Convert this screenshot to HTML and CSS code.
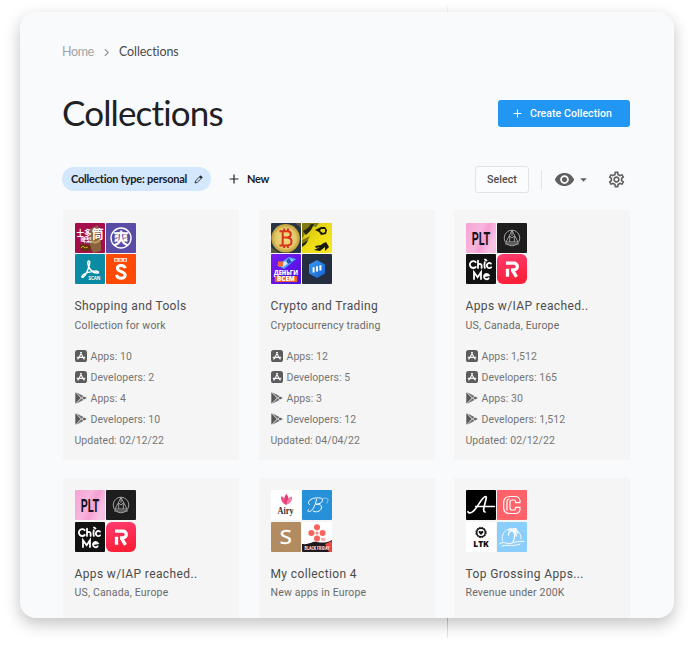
FILE: index.html
```html
<!DOCTYPE html>
<html lang="en">
<head>
<meta charset="utf-8">
<title>Collections</title>
<link rel="stylesheet" href="styles.css">
</head>
<body>
<svg class="defs" width="0" height="0" aria-hidden="true">
  <defs>
    <linearGradient id="pink" x1="0" y1="0" x2="1" y2="0.4"><stop offset="0" stop-color="#f6a4d6"/><stop offset=".5" stop-color="#f7b6dd"/><stop offset=".7" stop-color="#f59fd2"/><stop offset="1" stop-color="#f8c3e3"/></linearGradient>
    <linearGradient id="red" x1="0" y1="0" x2=".3" y2="1"><stop offset="0" stop-color="#ff3d72"/><stop offset="1" stop-color="#fb1f38"/></linearGradient>
    <linearGradient id="yellow" x1="0" y1="0" x2="1" y2="1"><stop offset="0" stop-color="#c9b90c"/><stop offset=".5" stop-color="#eddb16"/><stop offset="1" stop-color="#fbe822"/></linearGradient>
    <linearGradient id="violet" x1="0" y1="0" x2="1" y2="1"><stop offset="0" stop-color="#7a1bf0"/><stop offset="1" stop-color="#4a10e0"/></linearGradient>
    <radialGradient id="coin"><stop offset="0" stop-color="#f3dc86"/><stop offset=".75" stop-color="#e2c768"/><stop offset="1" stop-color="#b99a38"/></radialGradient>
    <linearGradient id="hex" x1="0" y1="0" x2="1" y2="1"><stop offset="0" stop-color="#3a9af5"/><stop offset="1" stop-color="#1463cf"/></linearGradient>
  </defs>
  <symbol id="i-appstore" viewBox="0 0 12 12"><rect width="12" height="12" rx="2.6" fill="#5c5c5c"/><path d="M6.5 2.6 3.5 8.6M5.5 2.6l3 6M2.2 7.3h7.6M2.700 9l.4-.7M9.300 9l-.4-.7" fill="none" stroke="#f5f5f5" stroke-width="1.15" stroke-linecap="round"/></symbol>
  <symbol id="i-play" viewBox="0 0 12 12"><path d="M.3.3v11.4L5.800 6z" fill="#585858"/><path d="M1.100.3 8.500 4.100 6.500 5.700zM1.100 11.700l7.400-3.800-2-1.600z" fill="#707070"/><path d="M9 4.400 11.900 6 9 7.600 7.200 6z" fill="#606060"/></symbol>
  <symbol id="i-plus" viewBox="0 0 10 10"><path d="M5 .6v8.800M.6 5h8.800" stroke="currentColor" stroke-width="1.2" fill="none"/></symbol>
  <symbol id="t-emblem" viewBox="0 0 30 30"><rect width="30" height="30" fill="#1d1d1d"/><g fill="none" stroke="#b5b5b5" stroke-width=".85"><circle cx="15" cy="15" r="7.800"/><path d="M15 7.500 9 19h12zM12.700 19v-6L15 15l2.300-2v6M8 21h14M15 7.500V13"/></g></symbol>
  <symbol id="t-chic" viewBox="0 0 30 30"><rect width="30" height="30" fill="#111"/><g fill="none" stroke="#fff" stroke-width="1.800" stroke-linecap="round"><path d="M9.700 8.200A3.400 3.400 0 1 0 9.700 13M12 6.700v7.200M12 11.300c.5-1.800 3.600-1.800 3.600.2v2.400M18.800 8.200c-.6 2-.6 3.800 0 5.700M19 5.500l1.500 1M25 9.600a2.500 2.500 0 1 0 .1 3.700M8 25v-6.800l3.600 5 3.400-5V25M18 22.200l4.900-.8a2.600 2.600 0 1 0-.3 2.900"/></g></symbol>
  <symbol id="t-r" viewBox="0 0 30 30"><rect width="30" height="30" rx="6" fill="url(#red)"/><path d="M9 9.200h8a3.300 3.300 0 0 1 0 6.600h-3M10.500 22.800v-8M15.300 16l4.200 6.800" fill="none" stroke="#fff" stroke-width="3.300"/></symbol>
</svg>

<main class="panel">
  <nav class="crumbs">
    <span class="crumb-home">Home</span>
    <svg class="chevron" viewBox="0 0 6 10"><path d="m1 1 4 4-4 4" fill="none" stroke="currentColor" stroke-width="1.300"/></svg>
    <span>Collections</span>
  </nav>

  <header class="head">
    <h1>Collections</h1>
    <button class="create"><svg class="plus-s"><use href="#i-plus"/></svg>Create Collection</button>
  </header>

  <section class="toolbar">
    <div class="pill">Collection type: personal
      <svg class="pencil" viewBox="0 0 10 10"><path d="m1.200 8.800.4-2.200L7 1.200c.5-.5 1.300.3 1.800.8s.2.900-.2 1.300L3.400 8.400z" fill="none" stroke="currentColor" stroke-width="1"/><path d="m5.800 2.300 1.400-1.400 2 2-1.400 1.400z" fill="currentColor"/></svg>
    </div>
    <button class="new"><svg class="plus-m"><use href="#i-plus"/></svg>New</button>
    <button class="select">Select</button>
    <span class="divider"></span>
    <svg class="eye" viewBox="0 0 24 24"><path fill="currentColor" d="M12 4.500C7 4.500 2.730 7.610 1 12c1.730 4.390 6 7.500 11 7.500s9.270-3.110 11-7.500c-1.730-4.390-6-7.500-11-7.500zM12 17c-2.760 0-5-2.240-5-5s2.240-5 5-5 5 2.240 5 5-2.240 5-5 5zm0-8c-1.660 0-3 1.340-3 3s1.340 3 3 3 3-1.340 3-3-1.340-3-3-3z"/></svg>
    <svg class="caret" viewBox="0 0 8 4"><path d="M.3 0h7.400L4 4z" fill="currentColor"/></svg>
    <svg class="gear" viewBox="0 0 24 24"><path fill="currentColor" d="M19.430 12.980c.04-.32.07-.64.07-.98s-.03-.66-.07-.98l2.110-1.650c.19-.15.24-.42.12-.64l-2-3.460c-.12-.22-.39-.3-.61-.22l-2.490 1c-.52-.4-1.080-.73-1.690-.98l-.38-2.650C14.460 2.180 14.250 2 14 2h-4c-.25 0-.46.18-.49.42l-.38 2.650c-.61.25-1.170.59-1.690.98l-2.490-1c-.23-.09-.49 0-.61.22l-2 3.460c-.13.22-.07.49.12.64l2.110 1.650c-.04.32-.07.65-.07.98s.03.66.07.98l-2.110 1.650c-.19.15-.24.42-.12.64l2 3.460c.12.22.39.3.61.22l2.490-1c.52.4 1.080.73 1.690.98l.38 2.650c.03.24.24.42.49.42h4c.25 0 .46-.18.49-.42l.38-2.650c.61-.25 1.170-.59 1.690-.98l2.490 1c.23.09.49 0 .61-.22l2-3.460c.12-.22.07-.49-.12-.64l-2.110-1.650zm-1.980-1.710c.04.31.05.52.05.73 0 .21-.02.43-.05.73l-.14 1.130.89.7 1.080.84-.7 1.210-1.270-.51-1.040-.42-.9.68c-.43.32-.84.56-1.250.73l-1.060.43-.16 1.130-.2 1.350h-1.400l-.19-1.350-.16-1.130-1.060-.43c-.43-.18-.83-.41-1.230-.71l-.91-.7-1.060.43-1.270.51-.7-1.210 1.080-.84.89-.7-.14-1.130c-.03-.31-.05-.54-.05-.74s.02-.43.05-.73l.14-1.130-.89-.7-1.080-.84.7-1.210 1.270.51 1.040.42.9-.68c.43-.32.84-.56 1.250-.73l1.060-.43.16-1.130.2-1.350h1.390l.19 1.350.16 1.130 1.060.43c.43.18.83.41 1.230.71l.91.7 1.060-.43 1.270-.51.7 1.210-1.070.85-.89.7.14 1.130zM12 8c-2.210 0-4 1.790-4 4s1.790 4 4 4 4-1.790 4-4-1.790-4-4-4zm0 6c-1.100 0-2-.9-2-2s.9-2 2-2 2 .9 2 2-.9 2-2 2z"/></svg>
  </section>

  <section class="grid">
    <article class="card">
      <div class="tiles">
        <svg viewBox="0 0 30 30"><rect width="30" height="30" fill="#a50d4b"/><path d="m15 6 8-4 3 17v9l-8 2-3-7z" fill="#8a633d"/><path d="M4 23c4-4 9-1 12 1l-1 4H7z" fill="#61340e"/><path d="M6 25l2-2 2 2 3-1" stroke="#d9a116" fill="none"/><path d="M16 18c4 3 6 1 9-1" stroke="#c19b6a" fill="none" stroke-width="2"/><g class="cjk"><text x="1.500" y="12.600" font-size="7.500">士多</text><text x="5.500" y="18.800" font-size="5.500">啤梨</text><text x="16.800" y="15.500" font-size="12">筒</text></g></svg>
        <svg viewBox="0 0 30 30"><rect width="30" height="30" fill="#5a4ba4"/><circle cx="15" cy="15" r="10" fill="none" stroke="#fff" stroke-width="1.400"/><text class="cjk" x="7.200" y="21" font-size="15.500">爽</text></svg>
        <svg viewBox="0 0 30 30"><rect width="30" height="30" fill="#0a8aa3"/><path d="M13.900 7c-1.300 0-1.400 2-.6 4.500 1.400 4.200 4.800 7.300 8.500 7.600 2.500.1 2.400-2-1-2-4.700 0-13 2.400-13.800 5.100-.5 2.400 2.600 1 5-4.400 1.800-4 3.900-10.800 1.900-10.800z" fill="none" stroke="#fff" stroke-width="1.500"/><text x="13.500" y="26" font-size="5" font-family="Open Sans" font-weight="700" fill="#fff" textLength="12" lengthAdjust="spacingAndGlyphs">SCAN</text></svg>
        <svg viewBox="0 0 30 30"><rect width="30" height="30" fill="#fe4a05"/><path d="M8 4h13v3.800H8z" fill="#ffd8c8"/><path d="M9.200 5h2v2h-2zM13.500 5h2v2h-2zM18 5h2v2h-2z" fill="#fe6a35"/><path d="M19.200 14.200c-1-4-7.800-3.400-7.800.1 0 4 7.800 2.800 7.800 7 0 3.800-7.600 4.200-8.700-.4" fill="none" stroke="#fff" stroke-width="3"/></svg>
      </div>
      <h2>Shopping and Tools</h2>
      <p class="sub">Collection for work</p>
      <ul class="stats">
        <li><svg><use href="#i-appstore"/></svg>Apps: 10</li>
        <li><svg><use href="#i-appstore"/></svg>Developers: 2</li>
        <li><svg><use href="#i-play"/></svg>Apps: 4</li>
        <li><svg><use href="#i-play"/></svg>Developers: 10</li>
        <li>Updated: 02/12/22</li>
      </ul>
    </article>
    <article class="card">
      <div class="tiles">
        <svg viewBox="0 0 30 30"><rect width="30" height="30" fill="#263443"/><path d="M0 24 8 30H0zM24 0h6v5z" fill="#5a5a38"/><circle cx="14.600" cy="15.300" r="14.300" fill="url(#coin)"/><circle cx="14.600" cy="15.300" r="11.800" fill="none" stroke="#c7a94d" stroke-width=".7" stroke-dasharray="1 1"/><path d="M11.700 8v15M8.500 8.200h7.700c4.800 0 4.800 6.300 0 6.300h-4M16.200 14.700c5.800 0 5.800 7.800 0 7.800H8.500M13.200 5.500v3M17 5.500v3M13.200 22v3M17 22v3" fill="none" stroke="#d8331b" stroke-width="2"/></svg>
        <svg viewBox="0 0 30 30"><rect width="30" height="30" fill="url(#yellow)"/><path d="M0 0h17l-3 4-4-1-3 6-4 2-3 5zM0 17l8-4-3 6-5 4z" fill="#817a13"/><path d="m1 8 5-3 3-4h3L9 7 4 12zM0 21l6-4-2 4-4 3z" fill="#242713"/><path d="m13 7 6-3 4 0 2 3-1 4-5 1-2-3zm6-1-1 2 3 2 2-1v-3zM12 27l6-3-4 1-1-2 6-1 1-1 4-2 3 5-4 4 0-4-5 4z" fill="#171812" fill-rule="evenodd"/></svg>
        <svg viewBox="0 0 30 30"><rect width="30" height="30" fill="url(#violet)"/><path d="m6 11 12-8 7 2-12 10z" fill="#4ea9ff"/><path d="m8 11 10-6 4 1-10 7z" fill="#d6e8f7"/><path d="M7 7.500h5v5H7z" fill="#ef6b3b"/><path d="m15 7 3-3 3 4-4 2z" fill="#2452c4"/><rect x="3.800" y="22" width="22.500" height="6" fill="#f15a2b"/><g fill="#fff" font-family="Open Sans" font-weight="800"><text x="3" y="20.800" font-size="6.300" textLength="24" lengthAdjust="spacingAndGlyphs">ДЕНЬГИ</text><text x="6" y="27.400" font-size="6.500" textLength="18" lengthAdjust="spacingAndGlyphs">ВСЕМ</text></g></svg>
        <svg viewBox="0 0 30 30"><rect width="30" height="30" fill="#242e40"/><path d="m15 6 8 4.500v9L15 24l-8-4.500v-9z" fill="url(#hex)"/><path d="M11.600 13.200v5.300M15 12.200v5.300M18.400 11.200v5.300" stroke="#fff" stroke-width="2"/></svg>
      </div>
      <h2>Crypto and Trading</h2>
      <p class="sub">Cryptocurrency trading</p>
      <ul class="stats">
        <li><svg><use href="#i-appstore"/></svg>Apps: 12</li>
        <li><svg><use href="#i-appstore"/></svg>Developers: 5</li>
        <li><svg><use href="#i-play"/></svg>Apps: 3</li>
        <li><svg><use href="#i-play"/></svg>Developers: 12</li>
        <li>Updated: 04/04/22</li>
      </ul>
    </article>
    <article class="card">
      <div class="tiles">
        <svg viewBox="0 0 30 30"><rect width="30" height="30" fill="url(#pink)"/><text class="plt" x="5.700" y="21.800" textLength="18.500" lengthAdjust="spacingAndGlyphs">PLT</text></svg>
        <svg><use href="#t-emblem"/></svg><svg><use href="#t-chic"/></svg><svg><use href="#t-r"/></svg>
      </div>
      <h2>Apps w/IAP reached..</h2>
      <p class="sub">US, Canada, Europe</p>
      <ul class="stats">
        <li><svg><use href="#i-appstore"/></svg>Apps: 1,512</li>
        <li><svg><use href="#i-appstore"/></svg>Developers: 165</li>
        <li><svg><use href="#i-play"/></svg>Apps: 30</li>
        <li><svg><use href="#i-play"/></svg>Developers: 1,512</li>
        <li>Updated: 02/12/22</li>
      </ul>
    </article>
    <article class="card">
      <div class="tiles">
        <svg viewBox="0 0 30 30"><rect width="30" height="30" fill="url(#pink)"/><text class="plt" x="5.700" y="21.800" textLength="18.500" lengthAdjust="spacingAndGlyphs">PLT</text></svg>
        <svg><use href="#t-emblem"/></svg><svg><use href="#t-chic"/></svg><svg><use href="#t-r"/></svg>
      </div>
      <h2>Apps w/IAP reached..</h2>
      <p class="sub">US, Canada, Europe</p>
    </article>
    <article class="card">
      <div class="tiles">
        <svg viewBox="0 0 30 30"><rect width="30" height="30" fill="#fff"/><path d="M15.300 15C11 13.500 9.500 10 10.200 6.300c2.500.4 4.500 3.500 5.100 8.700z" fill="#f0558a"/><path d="M15.300 15c-3-4-2.500-8 0-11 3 3 3 7 0 11z" fill="#e63a72"/><path d="M15.300 15c.3-5 2.300-8 5.700-8.500.5 4-1.500 7-5.700 8.500z" fill="#f47ca5"/><text x="6.500" y="24.300" font-size="10" font-family="Liberation Serif" font-weight="700" fill="#333" textLength="16" lengthAdjust="spacingAndGlyphs">Airy</text></svg>
        <svg viewBox="0 0 30 30"><rect width="30" height="30" fill="#2690d8"/><g fill="none" stroke="#fff" stroke-linecap="round"><path d="M14.500 9.500c-1 5-3 10-6.500 12-2 .7-3-.7-1.500-2" stroke-width="1"/><path d="M7.500 14.500c-3-1 0-6 6-6.500 4.500-.4 7.500 0 7 2.700-.5 2.500-4 3.300-6.500 3.600 3-.2 6.200.7 5.500 3.700-.8 3.500-6 5-8.500 3" stroke-width="1"/><path d="M20 9c3-1.500 6-1 6 1s-1 2-1 3" stroke-width=".5"/></g></svg>
        <svg viewBox="0 0 30 30"><rect width="30" height="30" fill="#b28b61"/><text x="8.800" y="22" font-size="20" font-family="Open Sans" fill="#fff" stroke="#fff" stroke-width=".4" textLength="12" lengthAdjust="spacingAndGlyphs">S</text></svg>
        <svg viewBox="0 0 30 30"><rect width="30" height="30" fill="#fff"/><g fill="#f8635b"><circle cx="15" cy="5.300" r="3"/><circle cx="9.400" cy="11" r="3"/><circle cx="20.600" cy="11" r="3"/><circle cx="15" cy="16.500" r="3"/><path d="m15 8 .6 2.400L18 11l-2.400.6L15 14l-.6-2.400L12 11l2.400-.6z"/></g><path d="M0 22c8 1 10-3 15-2s10 1 15-2v12H0z" fill="#20191e"/><path d="m23 22 7-3v11h-3z" fill="#ee4545"/><text x="19" y="19" font-size="3.500" font-family="Roboto" font-weight="700" fill="#f8635b">YU</text><text x="2.500" y="28.200" font-size="5" font-family="Roboto" font-weight="900" fill="#ffd9dc" textLength="25" lengthAdjust="spacingAndGlyphs">BLACK FRIDAY</text></svg>
      </div>
      <h2>My collection 4</h2>
      <p class="sub">New apps in Europe</p>
    </article>
    <article class="card">
      <div class="tiles">
        <svg viewBox="0 0 30 30"><rect width="30" height="30" fill="#000"/><g fill="none" stroke="#fff" stroke-linecap="round" stroke-width="1.700"><path d="M2 21.500c0 2 3 2 5.500-.5C12 17 15.500 7.500 19.500 6.500c1.500 0 .5 3-.3 6-1.400 5-2.500 9-.2 9.500"/><path d="M9.500 16.500h19" stroke-width="1.300"/></g></svg>
        <svg viewBox="0 0 30 30"><rect width="30" height="30" fill="#ff6269"/><path d="M23 12.700V11c0-3-2-4.500-5-4.500h-5C9 6.500 6.700 9 6.700 12v6c0 3.500 2.300 5.500 6.300 5.500h5c3 0 5-1.500 5-4.500v-1.700h-4.500v1.400c0 1-.5 1.300-1.500 1.300h-2c-1.500 0-2-.5-2-2v-6c0-1.500.5-2 2-2h2c1 0 1.500.5 1.500 1.300v1.400zM10 20.500v-9c0-1.500 1-2.500 2.500-2.500" fill="none" stroke="#fff" stroke-width="1.200"/></svg>
        <svg viewBox="0 0 30 30"><rect width="30" height="30" fill="#fff"/><circle cx="15" cy="10.500" r="4.300" fill="none" stroke="#111" stroke-width="1.500"/><circle cx="15" cy="10.500" r="5.200" fill="none" stroke="#111" stroke-width="1" stroke-dasharray="1.700 1.010"/><path d="m15 12.900-2.300-2.300c-.6-1.600 1.300-2.300 2.300-1 1-1.300 2.900-.6 2.300 1z" fill="#111"/><text x="7.300" y="24.600" font-size="8.800" font-family="Open Sans" font-weight="800" fill="#111" textLength="15.500" lengthAdjust="spacingAndGlyphs">LTK</text></svg>
        <svg viewBox="0 0 30 30"><rect width="30" height="30" fill="#8bcefb"/><g fill="none" stroke="#fff" stroke-linecap="round"><path d="M5.500 19A9.500 9.500 0 1 1 24 17" stroke-width=".8"/><path d="M2.500 22c4-3 6-.5 10-.5s7-3 14.500-2M5 24c8-2 11 1 18-2" stroke-width="1"/><path d="M16.200 9c1.800 3 1.800 7-.2 11" stroke-width="1.200"/><path d="M16 9c-1.500-2-3.500-2-4.500-1M16 9c-3-.5-4.500 1-4.500 4M16 9c0-2 2-3 3.500-2M16 9c2.500-.5 4.500.5 5 2M16 9c2.500 1.500 3.500 3 3.200 5" stroke-width="1.400"/></g></svg>
      </div>
      <h2>Top Grossing Apps...</h2>
      <p class="sub">Revenue under 200K</p>
    </article>
  </section>
</main>
</body>
</html>
```
FILE: styles.css
```css
* { box-sizing: border-box; }

body {
  margin: 0;
  height: 646px;
  padding: 12px 26px 0 20px;
  overflow: hidden;
  background: linear-gradient(#c4c4c4, #eee) 447px 618px / 1px 20px no-repeat,
    linear-gradient(#fafafa, #eee) 447px 5px / 1px 8px no-repeat, #fff;
  font-family: Roboto, sans-serif;
  color: #5c5c5c;
}

.defs { position: absolute; }
svg { display: block; flex: none; }
button { font: inherit; border: 0; background: none; padding: 0; }

.panel {
  height: 606px;
  padding: 0 44px 0 42px;
  overflow: hidden;
  border-radius: 16px;
  background: #f9fafc;
  box-shadow: 0 6px 16px rgba(0, 0, 0, 0.24);
}

.crumbs {
  display: flex;
  align-items: center;
  height: 16px;
  margin-top: 32px;
  font: 12.500px/16px Lato, sans-serif;
  font-variant-ligatures: none;
  letter-spacing: -0.100px;
  color: #4a4a4a;
}
.crumb-home { color: #a3a3a3; width: 32px; letter-spacing: -0.400px; }
.chevron { width: 5px; height: 9px; margin: 0 10px; color: #8a8a8a; }

.head {
  display: flex;
  justify-content: space-between;
  align-items: center;
  height: 44px;
  margin-top: 31.500px;
}
h1 {
  margin: -3px 0 0;
  font: 400 35px/44px Lato, sans-serif;
  font-variant-ligatures: none;
  letter-spacing: -0.850px;
  color: #202124;
}
.create {
  display: flex;
  align-items: center;
  width: 132px;
  height: 27px;
  padding-left: 15px;
  gap: 8px;
  border-radius: 3px;
  background: #2196f3;
  color: #fff;
  font-size: 10.500px;
  font-weight: 500;
  letter-spacing: 0.070px;
}
.plus-s { width: 9px; height: 9px; }

.toolbar {
  display: flex;
  align-items: center;
  height: 27px;
  margin-top: 30px;
}
.pill {
  display: flex;
  align-items: center;
  justify-content: space-between;
  width: 149px;
  height: 24px;
  padding: 0 8px 0 9px;
  border-radius: 12px;
  background: #d3e8fd;
  color: #202124;
  font: 700 11px/24px Lato, sans-serif;
  letter-spacing: -0.220px;
  white-space: nowrap;
}
.pencil { width: 9px; height: 9px; }
.new {
  display: flex;
  align-items: center;
  gap: 8px;
  margin: 0 auto 0 18px;
  color: #202124;
  font: 700 11px/24px Lato, sans-serif;
  letter-spacing: -0.300px;
}
.plus-m { width: 10px; height: 10px; }
.select {
  width: 54px;
  height: 27px;
  border: 1px solid #e2e3e5;
  border-radius: 3px;
  background: #fbfcfd;
  color: #4f4f4f;
  font-size: 10.700px;
  font-weight: 500;
}
.divider { width: 1px; height: 19px; margin: 0 12px; background: #e2e3e5; }
.eye, .gear, .caret { color: #5f5f5f; }
.eye { width: 21px; height: 21px; }
.caret { width: 7px; height: 4px; margin: 1px 20px 0 5px; }
.gear { width: 19px; height: 19px; margin-right: 4px; }

.grid {
  display: grid;
  grid-template-columns: 196px 195px 176px;
  grid-auto-rows: 249.500px;
  row-gap: 18px;
  margin: 17.500px 0 0 0.500px;
}
.card {
  width: 176.500px;
  padding: 12.500px 12px 0;
  background: #f5f5f5;
}
.tiles {
  display: grid;
  grid-template-columns: 30px 30px;
  gap: 1.500px;
}
.tiles svg { width: 30px; height: 30px; border-radius: 1px; }
.cjk { font-family: "Noto Sans CJK TC", sans-serif; font-weight: 700; fill: #fff; }
.plt { font: 700 18.500px Roboto, sans-serif; fill: #17131a; }
h2 {
  margin: 14px 0 0;
  font: 400 12px/16px Roboto, sans-serif;
  letter-spacing: 0.380px;
  color: #4c4c4c;
  white-space: nowrap;
}
.sub {
  margin: 3.500px 0 0;
  font-size: 10.500px;
  line-height: 15px;
  letter-spacing: 0.180px;
  color: #6a6a6a;
  white-space: nowrap;
}
.stats {
  margin: 13px 0 0;
  padding: 0;
  list-style: none;
  font-size: 10.500px;
  color: #757575;
}
.stats li { display: flex; align-items: center; height: 21px; letter-spacing: 0.050px; }
.stats svg { width: 12px; height: 12px; margin-right: 4px; }
```
